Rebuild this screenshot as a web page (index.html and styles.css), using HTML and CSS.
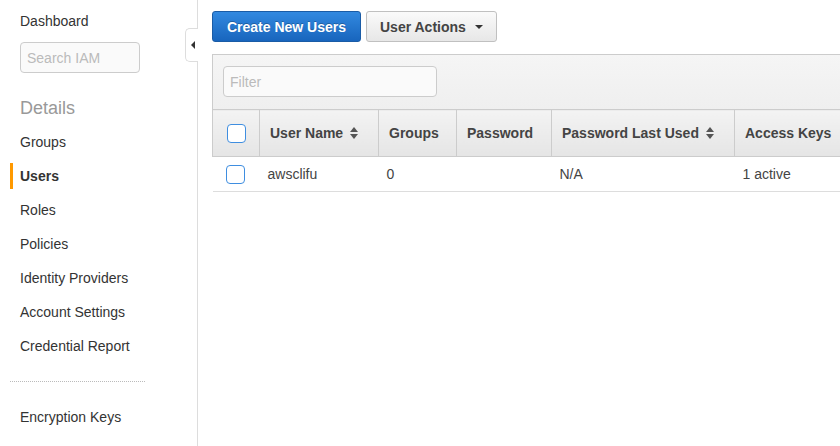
FILE: index.html
```html
<!DOCTYPE html>
<html>
<head>
<meta charset="utf-8">
<link rel="stylesheet" href="styles.css">
</head>
<body>
<div class="app">
  <aside class="sidebar">
    <div class="collapse-tab"><span class="tri-left"></span></div>
    <a class="nav-link top" href="#">Dashboard</a>
    <input class="search" type="text" placeholder="Search IAM">
    <div class="section-title">Details</div>
    <ul class="nav">
      <li><a class="nav-link" href="#">Groups</a></li>
      <li><a class="nav-link active" href="#">Users</a></li>
      <li><a class="nav-link" href="#">Roles</a></li>
      <li><a class="nav-link" href="#">Policies</a></li>
      <li><a class="nav-link" href="#">Identity Providers</a></li>
      <li><a class="nav-link" href="#">Account Settings</a></li>
      <li><a class="nav-link" href="#">Credential Report</a></li>
    </ul>
    <div class="divider"></div>
    <ul class="nav">
      <li><a class="nav-link" href="#">Encryption Keys</a></li>
    </ul>
  </aside>
  <main class="main">
    <div class="toolbar">
      <button class="btn btn-primary">Create New Users</button>
      <button class="btn btn-default">User Actions <span class="caret"></span></button>
    </div>
    <div class="panel">
      <div class="filter-bar">
        <input class="filter" type="text" placeholder="Filter">
      </div>
      <table class="grid">
        <colgroup>
          <col class="c-check">
          <col class="c-name">
          <col class="c-groups">
          <col class="c-pass">
          <col class="c-last">
          <col class="c-keys">
          <col class="c-rest">
        </colgroup>
        <thead>
          <tr>
            <th><span class="cb"></span></th>
            <th>User Name <span class="sort"></span></th>
            <th>Groups</th>
            <th>Password</th>
            <th>Password Last Used <span class="sort"></span></th>
            <th>Access Keys</th>
            <th></th>
          </tr>
        </thead>
        <tbody>
          <tr>
            <td><span class="cb"></span></td>
            <td>awsclifu</td>
            <td>0</td>
            <td></td>
            <td>N/A</td>
            <td>1 active</td>
            <td></td>
          </tr>
        </tbody>
      </table>
    </div>
  </main>
</div>
</body>
</html>
```

FILE: styles.css
```css
* { box-sizing: border-box; }
html, body { margin: 0; padding: 0; background: #fff; }
body {
  font-family: "Liberation Sans", Arial, sans-serif;
  font-size: 14px;
  color: #333;
  width: 840px;
  height: 446px;
  overflow: hidden;
}
.app { display: flex; height: 446px; }

.sidebar {
  position: relative;
  width: 198px;
  flex: 0 0 198px;
  border-right: 1px solid #ddd;
  padding-top: 4px;
}
.nav { list-style: none; margin: 0; padding: 0; }
.nav li { padding: 4px 0; }
.nav-link {
  display: block;
  color: #333;
  text-decoration: none;
  line-height: 26px;
  height: 26px;
  margin-left: 10px;
  padding-left: 7px;
  border-left: 3px solid transparent;
}
.nav-link.top { line-height: 34px; height: 34px; }
.nav-link.active { border-left-color: #f90; font-weight: bold; }
.search {
  display: block;
  margin: 4px 0 0 20px;
  width: 120px;
  height: 31px;
  border: 1px solid #ccc;
  border-radius: 4px;
  background: #fafafa;
  font-family: inherit;
  font-size: 14px;
  padding: 0 6px;
  color: #333;
}
.search::placeholder, .filter::placeholder { color: #bbb; }
.section-title {
  margin-top: 18px;
  padding-left: 20px;
  font-size: 18px;
  line-height: 34px;
  color: #999;
}
.divider {
  margin: 18px 0 18px 10px;
  width: 135px;
  border-top: 1px dotted #bbb;
}
.collapse-tab {
  position: absolute;
  right: -1px;
  top: 28px;
  width: 13px;
  height: 34px;
  background: #fff;
  border: 1px solid #ddd;
  border-right: none;
  border-radius: 5px 0 0 5px;
  display: flex;
  align-items: center;
  justify-content: center;
}
.tri-left {
  width: 0; height: 0;
  border-top: 4px solid transparent;
  border-bottom: 4px solid transparent;
  border-right: 4px solid #333;
  margin-left: 1px;
}

.main {
  flex: 1;
  padding: 11px 0 0 14px;
  overflow: hidden;
}
.toolbar { display: flex; gap: 5px; height: 31px; }
.btn {
  font-family: inherit;
  font-size: 14px;
  font-weight: bold;
  height: 31px;
  border-radius: 3px;
  padding: 0 12px;
  cursor: pointer;
  display: inline-flex;
  align-items: center;
  white-space: nowrap;
}
.btn-primary {
  width: 149px;
  justify-content: center;
  color: #fff;
  background: linear-gradient(#3289e0, #1865bd);
  border: 1px solid #1a5ca6;
  text-shadow: 0 -1px 0 rgba(0,0,0,0.25);
}
.btn-default {
  width: 131px;
  padding-left: 13px;
  color: #444;
  background: linear-gradient(#fafafa, #e7e7e7);
  border: 1px solid #c0c0c0;
}
.caret {
  display: inline-block;
  width: 0; height: 0;
  margin-left: 9px;
  border-left: 4px solid transparent;
  border-right: 4px solid transparent;
  border-top: 4px solid #333;
}

.panel { margin-top: 12px; width: 760px; }
.filter-bar {
  border-top: 1px solid #ccc;
  border-left: 1px solid #ccc;
  background: linear-gradient(#f5f5f5, #efefef);
  height: 55px;
  padding: 11px 10px;
}
.filter {
  display: block;
  width: 214px;
  height: 31px;
  border: 1px solid #ccc;
  border-radius: 4px;
  background: #fafafa;
  font-family: inherit;
  font-size: 14px;
  padding: 0 6px;
}

.grid {
  border-collapse: collapse;
  table-layout: fixed;
  width: 760px;
}
.c-check { width: 47px; }
.c-name { width: 119px; }
.c-groups { width: 78px; }
.c-pass { width: 95px; }
.c-last { width: 183px; }
.c-keys { width: 120px; }
.grid th {
  height: 47px;
  text-align: left;
  font-weight: bold;
  color: #444;
  padding: 0 10px;
  background: linear-gradient(#f3f3f3, #e5e5e5);
  border: 1px solid #ccc;
  white-space: nowrap;
}
.grid th:first-child { padding: 0 0 0 14px; }
.grid td {
  height: 35px;
  color: #444;
  padding: 0 8px;
  border-bottom: 1px solid #ddd;
  white-space: nowrap;
}
.grid td:first-child { padding: 0 0 0 13px; }
.cb {
  display: block;
  width: 19px;
  height: 19px;
  border: 1.5px solid #3f8ee0;
  border-radius: 4px;
  background: #fff;
}
.sort {
  display: inline-block;
  position: relative;
  width: 8px;
  height: 12px;
  margin-left: 3px;
  vertical-align: -1px;
}
.sort::before, .sort::after {
  content: "";
  position: absolute;
  left: 0;
  border-left: 4px solid transparent;
  border-right: 4px solid transparent;
}
.sort::before { top: 0; border-bottom: 5px solid #555; }
.sort::after { bottom: 0; border-top: 5px solid #555; }
```
